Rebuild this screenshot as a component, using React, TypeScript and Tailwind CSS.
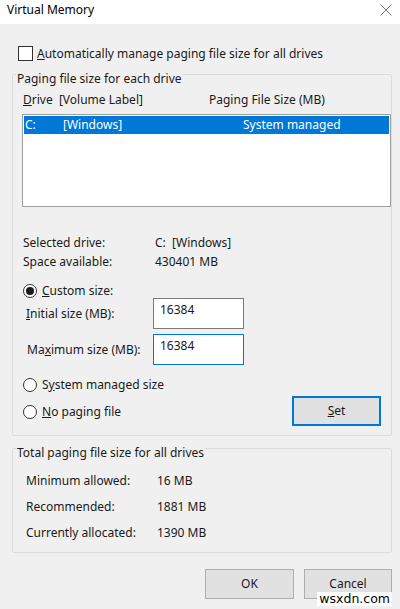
import type { ReactNode } from "react";

const font = { fontFamily: '"Noto Sans", "Open Sans", sans-serif' };

function Radio({ checked, children }: { checked?: boolean; children: ReactNode }) {
  return (
    <div className="flex items-center gap-[5px] h-[16px] ml-[1px]">
      <span className="w-[14px] h-[14px] rounded-full border border-[#333] bg-white flex items-center justify-center">
        {checked && <span className="w-[8px] h-[8px] rounded-full bg-[#1a1a1a]" />}
      </span>
      <span>{children}</span>
    </div>
  );
}

function Btn({ children, focused, className }: { children: ReactNode; focused?: boolean; className?: string }) {
  return (
    <div
      className={
        "flex items-center justify-center bg-[#e1e1e1] " +
        (focused ? "border-2 border-[#0078d7] " : "border border-[#adadad] ") +
        (className ?? "")
      }
    >
      {children}
    </div>
  );
}

function Group({ label, children, className }: { label: string; children: ReactNode; className?: string }) {
  return (
    <div className={"ml-[12px] mr-[8px] border border-[#dcdcdc] rounded-[2px] flex flex-col " + (className ?? "")}>
      <span className="self-start mt-[-4px] ml-[3px] px-[1px] leading-[16px] h-[16px] bg-[#f0f0f0]">{label}</span>
      {children}
    </div>
  );
}

export default function App() {
  return (
    <div style={font} className="w-[400px] h-[609px] bg-[#f0f0f0] text-[12px] leading-[16px] text-[#1a1a1a] flex flex-col relative overflow-hidden">
      {/* title bar */}
      <div className="h-[24px] bg-white flex items-center justify-between pl-[7px] pr-[8px] pb-[4px] shrink-0">
        <span className="text-black">Virtual Memory</span>
        <svg width="12" height="12" viewBox="0 0 12 12">
          <path d="M0.5 0.5 L11.5 11.5 M11.5 0.5 L0.5 11.5" stroke="#777" strokeWidth="1" />
        </svg>
      </div>

      {/* auto manage */}
      <div className="flex items-center gap-[4px] ml-[18px] mt-[22px] h-[15px]">
        <span className="w-[15px] h-[15px] border border-[#333] bg-white" />
        <span>
          <u>A</u>utomatically manage paging file size for all drives
        </span>
      </div>

      {/* paging file size for each drive */}
      <Group label="Paging file size for each drive" className="mt-[13px] h-[362px]">
        <div className="flex flex-col pl-[9px] pb-[9px]">
          <div className="flex mt-[5px] h-[16px] items-center pl-[1px]">
            <span className="w-[186px]">
              <u>D</u>rive&nbsp; [Volume Label]
            </span>
            <span>Paging File Size (MB)</span>
          </div>
          <div className="mt-[6px] h-[93px] bg-white border border-[#a0a0a0] p-[1px]">
            <div className="h-[18px] bg-[#0078d7] text-white flex items-center pl-[1px]">
              <span className="w-[38px]">C:</span>
              <span className="w-[180px]">[Windows]</span>
              <span>System managed</span>
            </div>
          </div>

          <div className="mt-[26px] flex h-[19px] items-center pl-[1px]">
            <span className="w-[132px]">Selected drive:</span>
            <span>C:&nbsp; [Windows]</span>
          </div>
          <div className="flex h-[19px] items-center pl-[1px]">
            <span className="w-[132px]">Space available:</span>
            <span>430401 MB</span>
          </div>

          <div className="mt-[12px]">
            <Radio checked>
              <u>C</u>ustom size:
            </Radio>
          </div>
          <div className="flex items-center mt-[-1px]">
            <span className="w-[131px] pl-[4px]">
              <u>I</u>nitial size (MB):
            </span>
            <div className="w-[91px] h-[31px] bg-white border border-[#7a7a7a] pl-[6px] pt-[3px]">16384</div>
          </div>
          <div className="flex items-center mt-[5px]">
            <span className="w-[131px] pl-[5px]">
              Ma<u>x</u>imum size (MB):
            </span>
            <div className="w-[91px] h-[31px] bg-white border border-[#0078d7] pl-[6px] pt-[3px]">16384</div>
          </div>

          <div className="mt-[12px]">
            <Radio>
              S<u>y</u>stem managed size
            </Radio>
          </div>
          <div className="flex items-center justify-between pr-[10px] mt-[3px]">
            <div className="mt-[2px]">
              <Radio>
                <u>N</u>o paging file
              </Radio>
            </div>
            <Btn focused className="w-[89px] h-[30px]">
              <u>S</u>et
            </Btn>
          </div>
        </div>
      </Group>

      {/* totals */}
      <Group label="Total paging file size for all drives" className="mt-[12px] h-[105px]">
        <div className="flex flex-col pl-[13px] mt-[7px]">
          <div className="flex h-[26px] items-center">
            <span className="w-[131px]">Minimum allowed:</span>
            <span>16 MB</span>
          </div>
          <div className="flex h-[26px] items-center">
            <span className="w-[131px]">Recommended:</span>
            <span>1881 MB</span>
          </div>
          <div className="flex h-[26px] items-center">
            <span className="w-[131px]">Currently allocated:</span>
            <span>1390 MB</span>
          </div>
        </div>
      </Group>

      <div className="flex justify-end gap-[10px] mr-[8px] mt-[16px]">
        <Btn className="w-[89px] h-[30px]">OK</Btn>
        <Btn className="w-[88px] h-[30px]">Cancel</Btn>
      </div>

      {/* watermark */}
      <div
        className="absolute right-[8px] bottom-[3px] bg-white px-[2px] text-[12.5px] leading-[14px] text-black"
        style={{ fontFamily: '"DejaVu Sans", sans-serif' }}
      >
        wsxdn.com
      </div>
    </div>
  );
}
